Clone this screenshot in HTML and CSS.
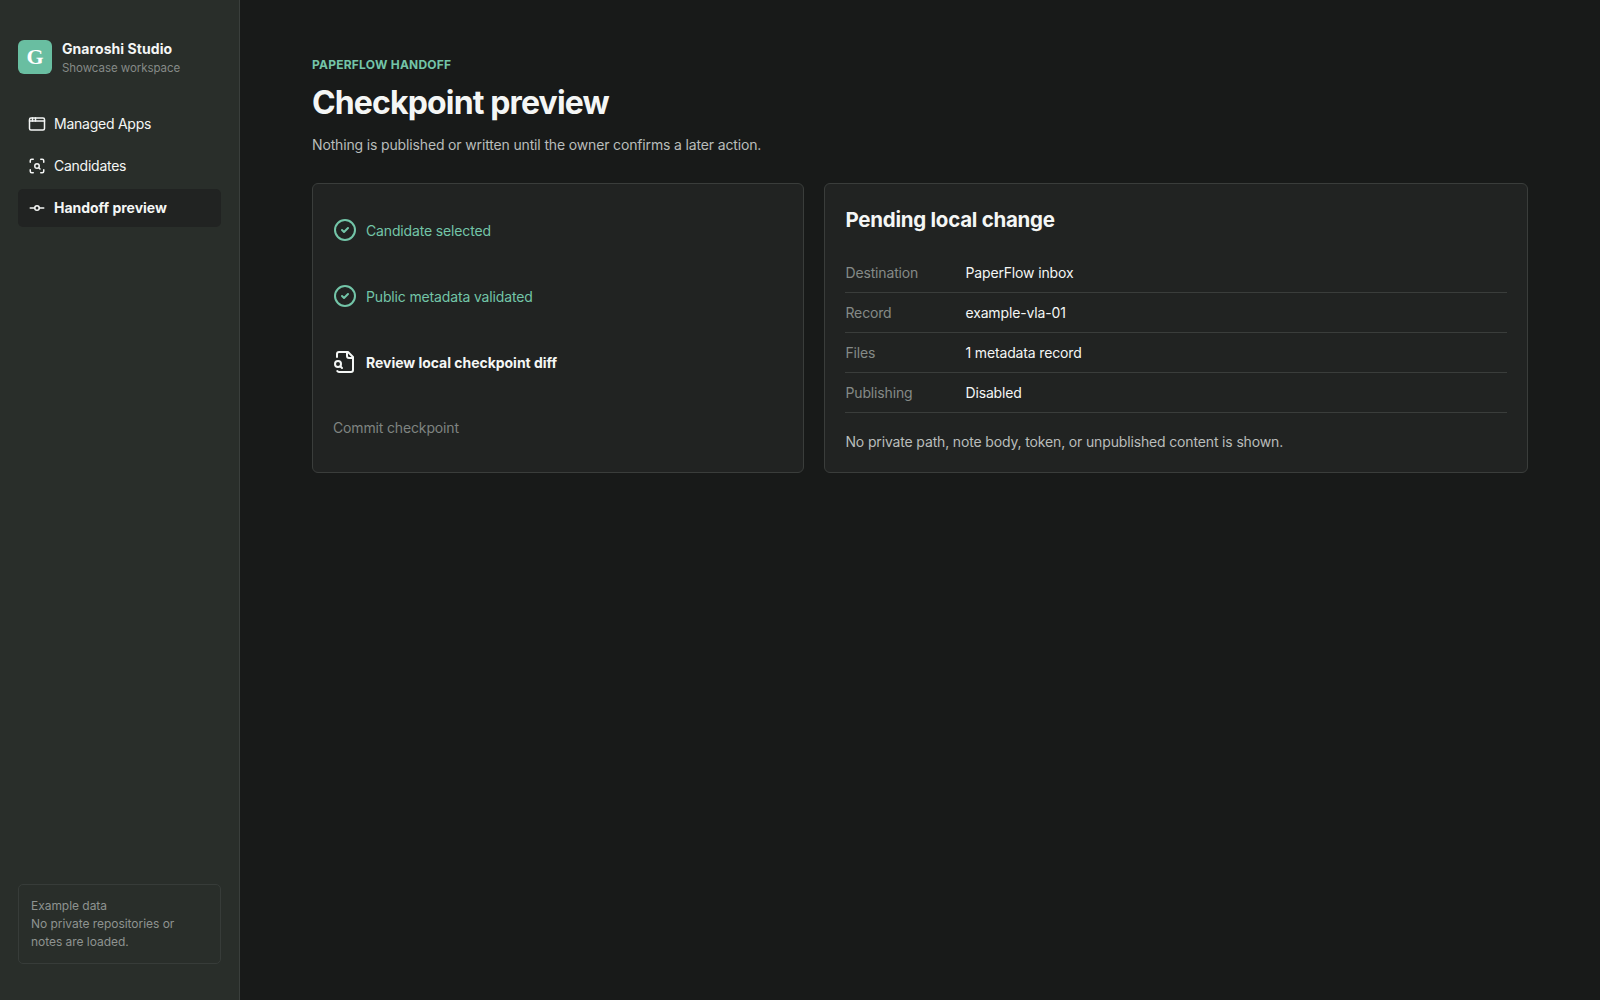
FILE: index.html
```
<!DOCTYPE html>
<html lang="en">
<head>
    <meta charset="UTF-8">
    <meta name="viewport" content="width=device-width, initial-scale=1.0">
    <title>Gnaroshi Studio</title>
    <link rel="stylesheet" href="styles.css">
</head>
<body>
    <div class="app">
        <aside class="sidebar">
            <div class="brand">
                <div class="brand-mark">G</div>
                <div class="brand-text">
                    <strong>Gnaroshi Studio</strong>
                    <span>Showcase workspace</span>
                </div>
            </div>

            <nav class="nav">
                <a class="nav-item">
                    <svg class="icon" viewBox="0 0 24 24"><rect x="2" y="4" width="20" height="16" rx="2"/><path d="M10 4v4"/><path d="M2 8h20"/><path d="M6 4v4"/></svg>
                    <span>Managed Apps</span>
                </a>
                <a class="nav-item">
                    <svg class="icon" viewBox="0 0 24 24"><path d="M3 7V5a2 2 0 0 1 2-2h2"/><path d="M17 3h2a2 2 0 0 1 2 2v2"/><path d="M21 17v2a2 2 0 0 1-2 2h-2"/><path d="M7 21H5a2 2 0 0 1-2-2v-2"/><circle cx="12" cy="12" r="3"/><path d="m16 16-1.9-1.9"/></svg>
                    <span>Candidates</span>
                </a>
                <a class="nav-item active">
                    <svg class="icon" viewBox="0 0 24 24"><circle cx="12" cy="12" r="3"/><path d="M3 12h6"/><path d="M15 12h6"/></svg>
                    <span>Handoff preview</span>
                </a>
            </nav>

            <div class="notice">Example data<br>No private repositories or notes are loaded.</div>
        </aside>

        <main class="main">
            <p class="eyebrow">PAPERFLOW HANDOFF</p>
            <h1>Checkpoint preview</h1>
            <p class="lead">Nothing is published or written until the owner confirms a later action.</p>

            <div class="panels">
                <section class="panel">
                    <ol class="steps">
                        <li class="done">
                            <svg class="icon" viewBox="0 0 24 24"><circle cx="12" cy="12" r="10"/><path d="m9 12 2 2 4-4"/></svg>
                            <span>Candidate selected</span>
                        </li>
                        <li class="done">
                            <svg class="icon" viewBox="0 0 24 24"><circle cx="12" cy="12" r="10"/><path d="m9 12 2 2 4-4"/></svg>
                            <span>Public metadata validated</span>
                        </li>
                        <li class="current">
                            <svg class="icon" viewBox="0 0 24 24"><path d="M14 2v4a2 2 0 0 0 2 2h4"/><path d="M4.268 21a2 2 0 0 0 1.727 1H18a2 2 0 0 0 2-2V7l-5-5H6a2 2 0 0 0-2 2v3"/><path d="m9 18-1.5-1.5"/><circle cx="5" cy="14" r="3"/></svg>
                            <span>Review local checkpoint diff</span>
                        </li>
                        <li><span>Commit checkpoint</span></li>
                    </ol>
                </section>

                <section class="panel">
                    <h2>Pending local change</h2>
                    <dl class="details">
                        <div><dt>Destination</dt><dd>PaperFlow inbox</dd></div>
                        <div><dt>Record</dt><dd>example-vla-01</dd></div>
                        <div><dt>Files</dt><dd>1 metadata record</dd></div>
                        <div><dt>Publishing</dt><dd>Disabled</dd></div>
                    </dl>
                    <p class="note">No private path, note body, token, or unpublished content is shown.</p>
                </section>
            </div>
        </main>
    </div>
</body>
</html>
```

FILE: styles.css
```
* {
    box-sizing: border-box;
}

body {
    margin: 0;
    background: #181a19;
    color: #f4f6f5;
    font-family: Inter, "Liberation Sans", sans-serif;
    font-size: 14px;
    line-height: 20px;
    letter-spacing: -0.15px;
}

.app {
    display: grid;
    grid-template-columns: 240px 1fr;
    height: 100vh;
}

.icon {
    flex: none;
    width: 18px;
    height: 18px;
    fill: none;
    stroke: currentColor;
    stroke-width: 2;
    stroke-linecap: round;
    stroke-linejoin: round;
}

.sidebar {
    display: flex;
    flex-direction: column;
    padding: 38px 18px 36px;
    background: #292e2a;
    border-right: 1px solid #3a3f3c;
}

.brand {
    display: flex;
    align-items: center;
    gap: 10px;
    height: 38px;
}

.brand-mark {
    display: grid;
    place-items: center;
    width: 34px;
    height: 34px;
    border-radius: 6px;
    background: #69bea1;
    color: #fff;
    font: bold 22px/34px Georgia, "Liberation Serif", serif;
}

.brand-text {
    padding-top: 2px;
}

.brand-text strong,
.brand-text span {
    display: block;
}

.brand-text strong {
    font-size: 14px;
    line-height: 20px;
    letter-spacing: 0.07px;
}

.brand-text span {
    color: #858a87;
    font-size: 11.5px;
    line-height: 18px;
    letter-spacing: -0.05px;
}

.nav {
    display: grid;
    gap: 4px;
    margin-top: 29px;
}

.nav-item {
    display: flex;
    align-items: center;
    gap: 8px;
    height: 38px;
    padding: 0 10px;
    border-radius: 5px;
    letter-spacing: -0.25px;
}

.nav-item.active {
    background: #212322;
    font-weight: 700;
    letter-spacing: -0.02px;
}

.notice {
    margin-top: auto;
    padding: 12px;
    border: 1px solid #373c39;
    border-radius: 5px;
    color: #8e9390;
    font-size: 12px;
    line-height: 18px;
    letter-spacing: -0.04px;
}

.main {
    padding: 56px 72px;
}

.eyebrow {
    margin: 0;
    color: #73c5a8;
    font-size: 12px;
    font-weight: 700;
    line-height: 18px;
    letter-spacing: 0.23px;
}

h1 {
    margin: 9px 0 12px;
    font-size: 32px;
    line-height: 40px;
    letter-spacing: -0.86px;
}

.lead {
    margin: 0 0 28px;
    color: #b9bdbb;
}

.panels {
    display: grid;
    grid-template-columns: 0.7fr 1fr;
    gap: 20px;
}

.panel {
    padding: 20px;
    border: 1px solid #3a3d3b;
    border-radius: 6px;
    background: #212322;
}

.steps {
    display: grid;
    gap: 14px;
    margin: 0;
    padding: 0;
    list-style: none;
    color: #7f8481;
}

.steps li {
    display: flex;
    align-items: center;
    gap: 9px;
    min-height: 50px;
    padding: 14px 0;
}

.steps span {
    padding-top: 2px;
}

.steps .icon {
    width: 24px;
    height: 24px;
}

.steps .done {
    color: #73c5a8;
}

.steps .current {
    color: #f4f6f5;
    font-weight: 700;
    letter-spacing: -0.03px;
}

h2 {
    margin: 0 0 17px;
    font-size: 20.5px;
    line-height: 32px;
    letter-spacing: -0.26px;
}

.details {
    margin: 0;
}

.details div {
    display: grid;
    grid-template-columns: 120px 1fr;
    height: 40px;
    padding: 10px 0 9px;
    border-bottom: 1px solid #3a3d3b;
}

.details dt {
    color: #858a87;
}

.details dd {
    margin: 0;
}

.note {
    margin: 19px 0 0;
    color: #b9bdbb;
}
```
